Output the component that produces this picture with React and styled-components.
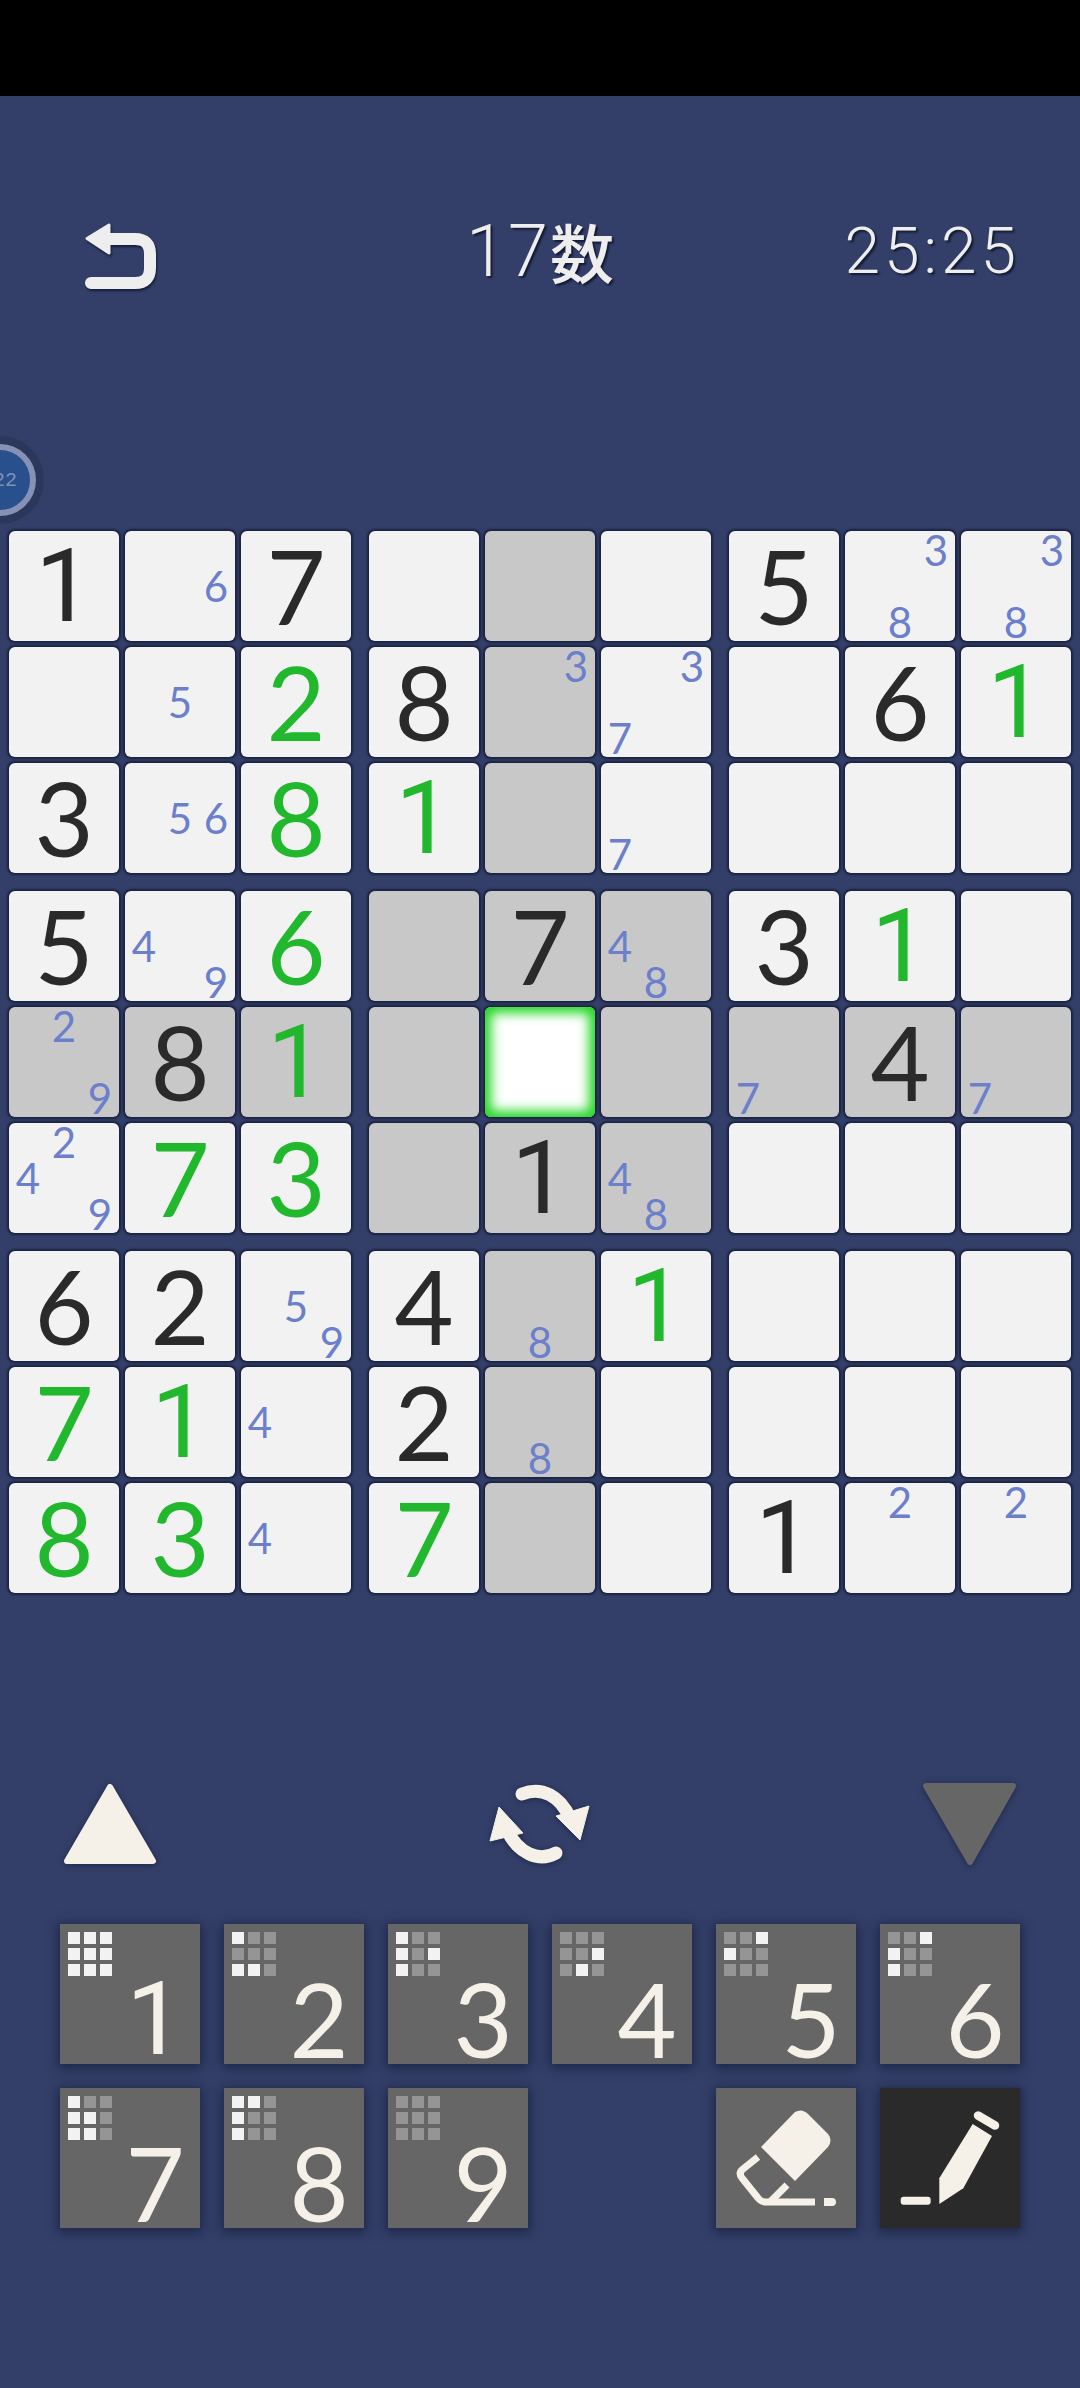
import React from 'react'
import styled, { createGlobalStyle } from 'styled-components'

const GlobalStyle = createGlobalStyle`
  html, body {
    margin: 0;
    padding: 0;
    background: #333f68;
  }
`

const DIGIT_FONT = `Lato, "Noto Sans", sans-serif`
// Lato's 1 has a foot, the game's font does not
const ONE_FONT = `Roboto, sans-serif`

const Page = styled.div`
  position: relative;
  width: 1080px;
  height: 2388px;
  overflow: hidden;
  background: #333f68;
  font-family: ${DIGIT_FONT};
`

const StatusBar = styled.div`
  height: 96px;
  background: #000;
`

const Header = styled.header`
  display: grid;
  grid-template-columns: 1fr auto 1fr;
  align-items: start;
  height: 435px;
  padding: 104px 60px 0 60px;
  box-sizing: border-box;
`

const BackIcon = styled.svg`
  width: 120px;
  height: 110px;
  filter: drop-shadow(1px 2px 1px rgba(15, 20, 45, 0.8));
`

const Title = styled.div`
  display: flex;
  align-items: center;
  margin-top: 12px;
  font-family: Roboto, sans-serif;
  font-weight: 300;
  font-size: 72px;
  line-height: 80px;
  letter-spacing: 2px;
  color: #eeeeee;
  text-shadow: 2px 2px 2px rgba(15, 20, 45, 0.85);
`

const Kanji = styled.span`
  margin-top: -4px;
  font-family: "Noto Sans CJK JP", sans-serif;
  font-weight: 500;
  font-size: 64px;
  letter-spacing: 0;
`

const Timer = styled.div`
  margin-top: 12px;
  text-align: right;
  font-family: Roboto, sans-serif;
  font-weight: 300;
  font-size: 64px;
  line-height: 80px;
  letter-spacing: 4px;
  color: #eeeeee;
  text-shadow: 2px 2px 2px rgba(15, 20, 45, 0.85);
`

const Bubble = styled.div`
  position: absolute;
  left: -36px;
  top: 444px;
  width: 72px;
  height: 72px;
  display: flex;
  align-items: center;
  justify-content: flex-end;
  padding-right: 13px;
  box-sizing: border-box;
  border-radius: 50%;
  border: 6px solid #8791b6;
  background: #27508c;
  box-shadow: 0 0 0 8px #2c375c;
  font-family: "Liberation Mono", monospace;
  font-size: 20px;
  color: #7f90b8;
`

const Board = styled.div`
  display: grid;
  grid-template-columns: repeat(3, 342px);
  gap: 18px;
  padding-left: 9px;
`

const Box = styled.div`
  display: grid;
  grid-template-columns: repeat(3, 110px);
  grid-auto-rows: 110px;
  gap: 6px;
`

const Cell = styled.div`
  display: flex;
  align-items: center;
  justify-content: center;
  border-radius: 6px;
  background: ${p => (p.$shaded ? '#c8c8c8' : '#f2f2f3')};
  box-shadow: 0 0 2px 2px #1c2342;
`

const SelectedCell = styled.div`
  border-radius: 6px;
  background: #fff;
  box-shadow: inset 0 0 12px 6px #1fd620, 0 0 2px 2px #1c2342;
`

const Digit = styled.span`
  font-family: ${p => (p.$one ? ONE_FONT : DIGIT_FONT)};
  font-size: 102px;
  line-height: 110px;
  color: ${p => (p.$given ? '#2a2a2a' : '#22b82e')};
`

const Notes = styled.div`
  display: grid;
  grid-template-columns: repeat(3, 36px);
  grid-auto-rows: 36px;
  padding: 1px;
`

const Note = styled.span`
  display: flex;
  align-items: center;
  justify-content: center;
  font-size: 42px;
  line-height: 36px;
  color: #6b7fcb;
`

const Controls = styled.div`
  display: flex;
  justify-content: space-between;
  height: 110px;
  margin-top: 177px;
  padding: 0 60px;
`

const ControlIcon = styled.svg`
  height: 110px;
  width: ${p => (p.$wide ? 140 : 100)}px;
  filter: drop-shadow(0 1px 3px rgba(15, 20, 50, 0.55));
`

const Pad = styled.div`
  display: grid;
  grid-template-columns: repeat(6, 140px);
  grid-auto-rows: 140px;
  gap: 24px;
  margin-top: 44px;
  padding-left: 60px;
`

const PadButton = styled.div`
  display: grid;
  grid-template: 50px 90px / 50px 90px;
  background: ${p => (p.$active ? '#2a2a2a' : '#666666')};
  box-shadow: 0 2px 10px 2px rgba(20, 28, 60, 0.7);
  grid-column: ${p => p.$col || 'auto'};
`

const MiniGrid = styled.div`
  display: grid;
  grid-template-columns: repeat(3, 12px);
  grid-auto-rows: 12px;
  gap: 4px;
  margin: 8px 0 0 8px;
`

const MiniDot = styled.i`
  background: ${p => (p.$on ? '#f2f2f3' : '#959595')};
`

const PadDigit = styled.span`
  grid-column: 2;
  grid-row: 2;
  display: flex;
  align-items: center;
  justify-content: center;
  font-family: ${p => (p.$one ? ONE_FONT : DIGIT_FONT)};
  font-size: 102px;
  line-height: 90px;
  color: #f5f1e8;
`

const ToolIcon = styled.svg`
  width: 140px;
  height: 140px;
  grid-column: 1 / 3;
  grid-row: 1 / 3;
`

const CREAM = '#f5f1e8'

// plain digit = given, g = entered by the player, arrays = pencil notes, 0 = empty
const g = n => ({ green: n })
const ROWS = [
  [1, [6], 7, 0, 0, 0, 5, [3, 8], [3, 8]],
  [0, [5], g(2), 8, [3], [3, 7], 0, 6, g(1)],
  [3, [5, 6], g(8), g(1), 0, [7], 0, 0, 0],
  [5, [4, 9], g(6), 0, 7, [4, 8], 3, g(1), 0],
  [[2, 9], 8, g(1), 0, 'sel', 0, [7], 4, [7]],
  [[2, 4, 9], g(7), g(3), 0, 1, [4, 8], 0, 0, 0],
  [6, 2, [5, 9], 4, [8], g(1), 0, 0, 0],
  [g(7), g(1), [4], 2, [8], 0, 0, 0, 0],
  [g(8), g(3), [4], g(7), 0, 0, 1, [2], [2]],
]

const PADS = [
  { n: 1, on: [0, 1, 2, 3, 4, 5, 6, 7, 8] },
  { n: 2, on: [0, 6, 7] },
  { n: 3, on: [0, 3, 5, 6] },
  { n: 4, on: [5, 7] },
  { n: 5, on: [2, 3] },
  { n: 6, on: [2, 3, 6] },
  { n: 7, on: [0, 3, 4, 6, 7] },
  { n: 8, on: [0, 1, 3, 6] },
  { n: 9, on: [] },
]

function isShaded(r, c) {
  return r === 4 || c === 4 || (r >= 3 && r <= 5 && c >= 3 && c <= 5)
}

function BoardCell({ value, r, c }) {
  if (value === 'sel') return <SelectedCell />
  const shaded = isShaded(r, c)
  if (Array.isArray(value)) {
    return (
      <Cell $shaded={shaded}>
        <Notes>
          {[1, 2, 3, 4, 5, 6, 7, 8, 9].map(n => (
            <Note key={n}>{value.includes(n) ? n : ''}</Note>
          ))}
        </Notes>
      </Cell>
    )
  }
  if (value === 0) return <Cell $shaded={shaded} />
  if (typeof value === 'object') {
    return <Cell $shaded={shaded}><Digit $one={value.green === 1}>{value.green}</Digit></Cell>
  }
  return <Cell $shaded={shaded}><Digit $given $one={value === 1}>{value}</Digit></Cell>
}

function boxes() {
  const out = []
  for (let br = 0; br < 3; br++) {
    for (let bc = 0; bc < 3; bc++) {
      const cells = []
      for (let r = br * 3; r < br * 3 + 3; r++) {
        for (let c = bc * 3; c < bc * 3 + 3; c++) {
          cells.push(<BoardCell key={`${r}-${c}`} value={ROWS[r][c]} r={r} c={c} />)
        }
      }
      out.push(<Box key={`${br}-${bc}`}>{cells}</Box>)
    }
  }
  return out
}

export default function App() {
  return (
    <Page>
      <GlobalStyle />
      <StatusBar />
      <Header>
        <BackIcon viewBox="0 0 120 110">
          <path d="M45 39 H75 Q90 39 90 54 V68 Q90 83 75 83 H31" fill="none" stroke="#eeeeee" strokeWidth="12" strokeLinecap="round" />
          <path d="M27 38.5 L49 25 V53 Z" fill="#eeeeee" stroke="#eeeeee" strokeWidth="3" strokeLinejoin="round" />
        </BackIcon>
        <Title>17<Kanji>数</Kanji></Title>
        <Timer>25:25</Timer>
      </Header>
      <Bubble>22</Bubble>
      <Board>{boxes()}</Board>
      <Controls>
        <ControlIcon viewBox="0 0 100 110">
          <polygon points="50,17 93,91 7,91" fill={CREAM} stroke={CREAM} strokeWidth="6" strokeLinejoin="round" />
        </ControlIcon>
        <ControlIcon $wide viewBox="0 0 140 110">
          <path d="M52 24 C72 16 90 26 100 48" fill="none" stroke={CREAM} strokeWidth="13" strokeLinecap="round" />
          <polygon points="119,36 110,70 86,46" fill={CREAM} stroke={CREAM} strokeWidth="1" strokeLinejoin="round" />
          <path d="M86 83 C68 93 48 82 38 62" fill="none" stroke={CREAM} strokeWidth="13" strokeLinecap="round" />
          <polygon points="29,37 53,63 20,71" fill={CREAM} stroke={CREAM} strokeWidth="1" strokeLinejoin="round" />
        </ControlIcon>
        <ControlIcon viewBox="0 0 100 110">
          <polygon points="6,16 93,16 50,92" fill="#666666" stroke="#666666" strokeWidth="6" strokeLinejoin="round" />
        </ControlIcon>
      </Controls>
      <Pad>
        {PADS.map(p => (
          <PadButton key={p.n}>
            <MiniGrid>
              {[0, 1, 2, 3, 4, 5, 6, 7, 8].map(i => <MiniDot key={i} $on={p.on.includes(i)} />)}
            </MiniGrid>
            <PadDigit $one={p.n === 1}>{p.n}</PadDigit>
          </PadButton>
        ))}
        <PadButton $col={5}>
          <ToolIcon viewBox="0 0 140 140">
            <path d="M79 24 Q86 20 92 26 L112 46 Q117 52 112 59 L79 93 L45 59 Z" fill={CREAM} />
            <path d="M42 69 L27 81 Q22 85 26 90 L42 110 Q45 114 50 114 H99" fill="none" stroke={CREAM} strokeWidth="7" />
            <path d="M71 97 L54 114" fill="none" stroke={CREAM} strokeWidth="7" />
            <path d="M108 110 H116 Q120 110 120 114 Q120 118 116 118 H108 Z" fill={CREAM} />
          </ToolIcon>
        </PadButton>
        <PadButton $active>
          <ToolIcon viewBox="0 0 140 140">
            <polygon points="92.7,36 112,48 83.3,100.3 59.3,116 59.3,90.3" fill={CREAM} />
            <path d="M98 27.5 L115 37.5" fill="none" stroke={CREAM} strokeWidth="8.5" strokeLinecap="round" />
            <rect x="20.7" y="108.7" width="30" height="8" rx="3" fill={CREAM} />
          </ToolIcon>
        </PadButton>
      </Pad>
    </Page>
  )
}
